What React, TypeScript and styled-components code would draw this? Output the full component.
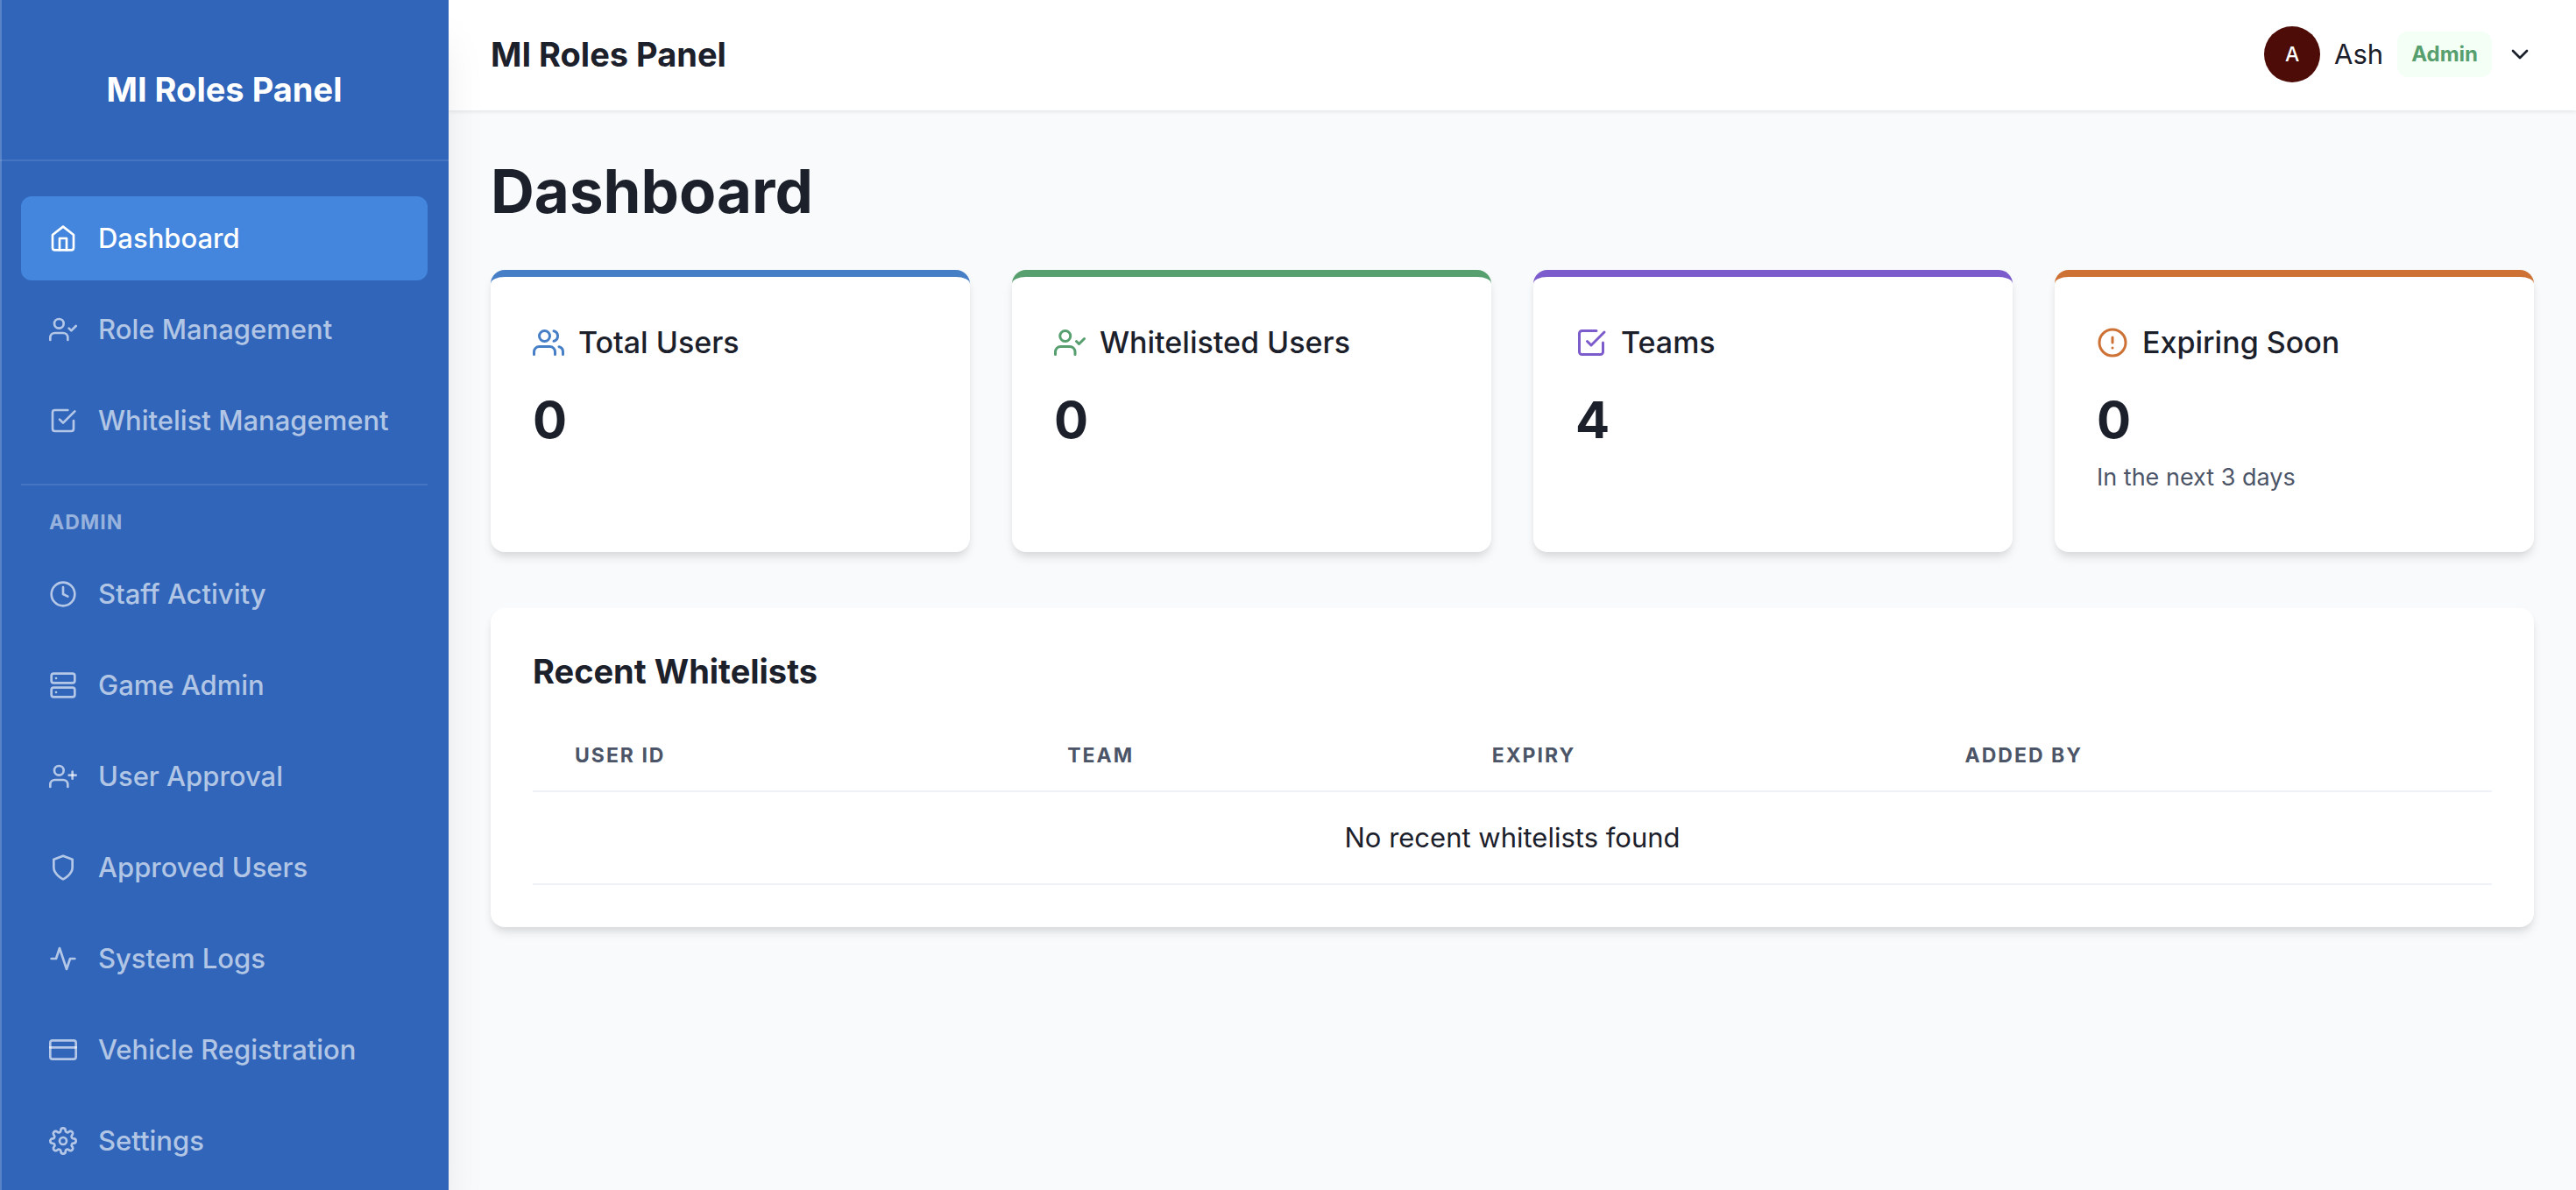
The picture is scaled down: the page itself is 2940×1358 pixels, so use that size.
import React from "react";
import styled, { createGlobalStyle } from "styled-components";
import type { IconType } from "react-icons";
import {
  FiActivity,
  FiAlertCircle,
  FiCheckSquare,
  FiChevronDown,
  FiClock,
  FiCreditCard,
  FiHome,
  FiServer,
  FiSettings,
  FiShield,
  FiUserCheck,
  FiUserPlus,
  FiUsers,
} from "react-icons/fi";

const color = {
  page: "#f8fafc",
  surface: "#ffffff",
  text: "#1b202b",
  muted: "#4c5567",
  rule: "#eef2f6",
  sidebar: "#3065ba",
  active: "#4486dd",
  blue: "#477fc7",
  green: "#579f6e",
  purple: "#7c5ccc",
  orange: "#cd7134",
};

const cardShadow =
  "0 8px 12px -2px rgba(0, 0, 0, 0.1), 0 4px 8px -2px rgba(0, 0, 0, 0.06)";

const GlobalStyle = createGlobalStyle`
  *, *::before, *::after { box-sizing: border-box; }
  body {
    margin: 0;
    background: ${color.page};
    color: ${color.text};
    font-family: Inter, "Liberation Sans", sans-serif;
    font-size: 31px;
    line-height: 48px;
    -webkit-font-smoothing: antialiased;
  }
  h1, h2, p, ul, dl, dd { margin: 0; padding: 0; }
`;

const Shell = styled.div`
  display: grid;
  grid-template-columns: 512px minmax(0, 1fr);
  min-height: 100vh;
`;

const Sidebar = styled.aside`
  z-index: 1;
  background: ${color.sidebar};
  color: #ffffff;
  box-shadow:
    inset 2px 0 0 rgba(255, 255, 255, 0.2),
    0 40px 50px -10px rgba(0, 0, 0, 0.1),
    0 20px 20px -10px rgba(0, 0, 0, 0.04);
`;

const Brand = styled.div`
  padding: 78px 32px 56px;
  border-bottom: 2px solid rgba(255, 255, 255, 0.1);
  font-size: 38px;
  font-weight: 700;
  text-align: center;
`;

const Nav = styled.nav`
  padding: 40px 24px 0;
`;

const NavList = styled.ul`
  display: grid;
  gap: 8px;
  list-style: none;
`;

const NavLink = styled.a<{ $active?: boolean }>`
  display: flex;
  align-items: center;
  gap: 24px;
  padding: 24px 32px;
  border-radius: 12px;
  background: ${({ $active }) => ($active ? color.active : "transparent")};
  color: ${({ $active }) => ($active ? "#ffffff" : "rgba(255, 255, 255, 0.64)")};
  font-weight: 500;
  text-decoration: none;
  white-space: nowrap;
`;

const NavHeading = styled.h2`
  margin-top: 24px;
  padding: 22px 32px 14px;
  border-top: 2px solid rgba(255, 255, 255, 0.1);
  color: rgba(255, 255, 255, 0.5);
  font-size: 23px;
  font-weight: 700;
  line-height: 40px;
  letter-spacing: 1px;
  text-transform: uppercase;
`;

const Content = styled.div`
  display: flex;
  flex-direction: column;
  min-width: 0;
`;

const TopBar = styled.header`
  display: flex;
  align-items: center;
  justify-content: space-between;
  padding: 30px 48px 32px;
  background: ${color.surface};
  box-shadow: 0 2px 4px rgba(0, 0, 0, 0.08);
`;

const TopTitle = styled.div`
  font-size: 38px;
  font-weight: 700;
`;

const UserMenu = styled.button`
  display: flex;
  align-items: center;
  gap: 16px;
  padding: 0;
  border: 0;
  background: none;
  color: inherit;
  font: inherit;
`;

const Avatar = styled.span`
  display: grid;
  place-items: center;
  width: 64px;
  height: 64px;
  border-radius: 50%;
  background: #4d0c07;
  color: #ffffff;
  font-size: 23px;
  font-weight: 500;
`;

const Badge = styled.span`
  padding: 6px 16px;
  border-radius: 12px;
  background: #f4fff6;
  color: ${color.green};
  font-size: 24px;
  font-weight: 700;
  line-height: 40px;
`;

const Main = styled.main`
  padding: 48px;
`;

const PageTitle = styled.h1`
  margin-bottom: 46px;
  font-size: 69px;
  font-weight: 700;
  line-height: 88px;
`;

const Stats = styled.dl`
  display: grid;
  grid-template-columns: repeat(4, minmax(0, 1fr));
  gap: 48px;
`;

const StatCard = styled.div<{ $accent: string }>`
  min-height: 322px;
  padding: 48px 48px 64px;
  border-top: 8px solid ${({ $accent }) => $accent};
  border-radius: 16px;
  background: ${color.surface};
  box-shadow: ${cardShadow};

  svg {
    color: ${({ $accent }) => $accent};
  }
`;

const StatLabel = styled.dt`
  display: flex;
  align-items: center;
  gap: 16px;
  margin-bottom: 16px;
  font-size: 34px;
  font-weight: 500;
  line-height: 54px;
  white-space: nowrap;
`;

const StatValue = styled.dd`
  font-size: 58px;
  font-weight: 700;
  line-height: 90px;
`;

const StatNote = styled.dd`
  color: ${color.muted};
  font-size: 27px;
  line-height: 42px;
`;

const Panel = styled.section`
  margin-top: 64px;
  padding: 48px;
  border-radius: 16px;
  background: ${color.surface};
  box-shadow: ${cardShadow};
`;

const PanelTitle = styled.h2`
  margin-bottom: 32px;
  font-size: 38px;
  font-weight: 700;
`;

const Table = styled.table`
  width: 100%;
  border-collapse: separate;
  border-spacing: 0;
`;

const HeadCell = styled.th`
  padding: 24px 48px;
  border-bottom: 2px solid ${color.rule};
  color: ${color.muted};
  font-size: 23px;
  font-weight: 700;
  line-height: 32px;
  letter-spacing: 2px;
  text-align: left;
  text-transform: uppercase;
`;

const EmptyCell = styled.td`
  padding: 32px 48px;
  border-bottom: 2px solid ${color.rule};
  line-height: 40px;
  text-align: center;
`;

type NavEntry = { label: string; icon: IconType; active?: boolean };

const mainNav: NavEntry[] = [
  { label: "Dashboard", icon: FiHome, active: true },
  { label: "Role Management", icon: FiUserCheck },
  { label: "Whitelist Management", icon: FiCheckSquare },
];

const adminNav: NavEntry[] = [
  { label: "Staff Activity", icon: FiClock },
  { label: "Game Admin", icon: FiServer },
  { label: "User Approval", icon: FiUserPlus },
  { label: "Approved Users", icon: FiShield },
  { label: "System Logs", icon: FiActivity },
  { label: "Vehicle Registration", icon: FiCreditCard },
  { label: "Settings", icon: FiSettings },
];

const stats: { label: string; value: number; icon: IconType; accent: string; note?: string }[] = [
  { label: "Total Users", value: 0, icon: FiUsers, accent: color.blue },
  { label: "Whitelisted Users", value: 0, icon: FiUserCheck, accent: color.green },
  { label: "Teams", value: 4, icon: FiCheckSquare, accent: color.purple },
  { label: "Expiring Soon", value: 0, icon: FiAlertCircle, accent: color.orange, note: "In the next 3 days" },
];

const columns = ["User ID", "Team", "Expiry", "Added By"];

function NavItems({ entries }: { entries: NavEntry[] }) {
  return (
    <NavList>
      {entries.map(({ label, icon: Icon, active }) => (
        <li key={label}>
          <NavLink href="#" $active={active} aria-current={active ? "page" : undefined}>
            <Icon size={32} aria-hidden />
            {label}
          </NavLink>
        </li>
      ))}
    </NavList>
  );
}

export default function App() {
  return (
    <>
      <GlobalStyle />
      <Shell>
        <Sidebar>
          <Brand>MI Roles Panel</Brand>
          <Nav>
            <NavItems entries={mainNav} />
            <NavHeading>Admin</NavHeading>
            <NavItems entries={adminNav} />
          </Nav>
        </Sidebar>
        <Content>
          <TopBar>
            <TopTitle>MI Roles Panel</TopTitle>
            <UserMenu type="button" aria-haspopup="menu">
              <Avatar>A</Avatar>
              <span>Ash</span>
              <Badge>Admin</Badge>
              <FiChevronDown size={32} aria-hidden />
            </UserMenu>
          </TopBar>
          <Main>
            <PageTitle>Dashboard</PageTitle>
            <Stats>
              {stats.map(({ label, value, icon: Icon, accent, note }) => (
                <StatCard key={label} $accent={accent}>
                  <StatLabel>
                    <Icon size={36} aria-hidden />
                    {label}
                  </StatLabel>
                  <StatValue>{value}</StatValue>
                  {note && <StatNote>{note}</StatNote>}
                </StatCard>
              ))}
            </Stats>
            <Panel>
              <PanelTitle>Recent Whitelists</PanelTitle>
              <Table>
                <thead>
                  <tr>
                    {columns.map((name) => (
                      <HeadCell key={name} scope="col">{name}</HeadCell>
                    ))}
                  </tr>
                </thead>
                <tbody>
                  <tr>
                    <EmptyCell colSpan={columns.length}>No recent whitelists found</EmptyCell>
                  </tr>
                </tbody>
              </Table>
            </Panel>
          </Main>
        </Content>
      </Shell>
    </>
  );
}
